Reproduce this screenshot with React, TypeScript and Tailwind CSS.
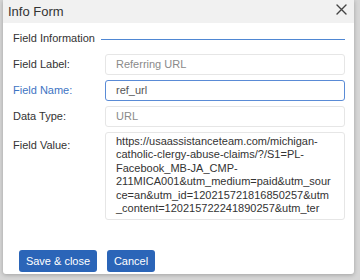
import React from "react";

const lines = [
  "https://usaassistanceteam.com/michigan-",
  "catholic-clergy-abuse-claims/?/S1=PL-",
  "Facebook_MB-JA_CMP-",
  "211MICA001&utm_medium=paid&utm_sour",
  "ce=an&utm_id=120215721816850257&utm",
  "_content=120215722241890257&utm_ter",
];

export default function App() {
  return (
    <div
      className="w-[360px] h-[280px] bg-[#d6d6d6] overflow-hidden"
      style={{ fontFamily: '"Liberation Sans", Arial, sans-serif' }}
    >
      <div className="ml-[3px] w-[351px] h-[274px] bg-white rounded-b-[3px] shadow-[0_1px_4px_rgba(0,0,0,0.25)] flex flex-col">
        <div className="h-[23px] bg-[#f1f1f1] flex items-center justify-between pl-[5px] pr-[7px]">
          <span className="text-[13px] text-[#333]">Info Form</span>
          <svg width="11" height="11" viewBox="0 0 11 11" className="mt-[-4px]">
            <path d="M1 1L10 10M10 1L1 10" stroke="#444" strokeWidth="1.4" strokeLinecap="round" />
          </svg>
        </div>
        <div className="flex flex-col pl-[10px] pr-[9px] pt-[8px]">
          <div className="flex items-center h-[14px]">
            <span className="text-[11px] text-[#333]">Field Information</span>
            <div className="flex-1 ml-[6px] mt-[3px] h-px bg-[#4f87d3]" />
          </div>
          <div className="grid grid-cols-[92px_240px] gap-y-[5px] mt-[9px] text-[11px]">
            <div className="flex items-center text-[#333]">Field Label:</div>
            <div className="h-[21px] border border-[#e6e6e6] rounded-[3px] flex items-center pl-[10px] text-[#8a8a8a]">
              Referring URL
            </div>
            <div className="flex items-center text-[#3d74c3]">Field Name:</div>
            <div className="h-[21px] border border-[#5a8bd6] rounded-[3px] flex items-center pl-[10px] text-[#555]">
              ref_url
            </div>
            <div className="flex items-center text-[#333]">Data Type:</div>
            <div className="h-[21px] border border-[#e6e6e6] rounded-[3px] flex items-center pl-[10px] text-[#8a8a8a]">
              URL
            </div>
            <div className="text-[#333] pt-[5px]">Field Value:</div>
            <div className="h-[88px] border border-[#e6e6e6] rounded-[3px] pl-[10px] pt-[2px] text-[#333] leading-[13.4px]">
              {lines.map((l) => (
                <div key={l}>{l}</div>
              ))}
            </div>
          </div>
          <div className="flex gap-[10px] mt-[30px] pl-[6px]">
            <button className="h-[22px] w-[78px] bg-[#2b65b8] text-white text-[11px] rounded-[3px]">
              Save &amp; close
            </button>
            <button className="h-[22px] w-[48px] bg-[#2b65b8] text-white text-[11px] rounded-[3px]">
              Cancel
            </button>
          </div>
        </div>
      </div>
    </div>
  );
}
